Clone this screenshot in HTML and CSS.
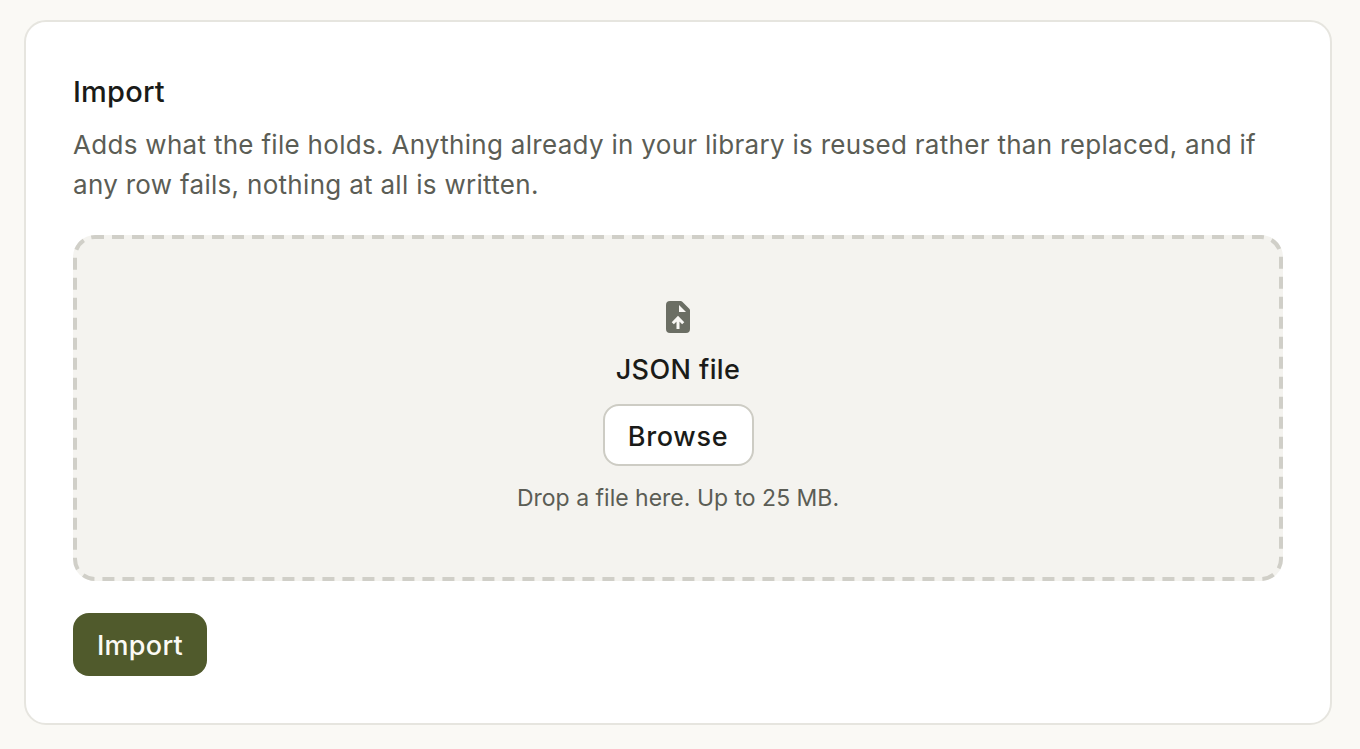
FILE: index.html
```html
<!DOCTYPE html>
<html lang="en">
<head>
    <meta charset="UTF-8">
    <meta name="viewport" content="width=device-width, initial-scale=1.0">
    <title>Import</title>
    <link rel="stylesheet" href="styles.css">
</head>
<body>
    <section class="card">
        <h2 class="card-title">Import</h2>
        <p class="card-text">Adds what the file holds. Anything already in your library is reused rather than replaced, and if any row fails, nothing at all is written.</p>

        <div class="dropzone">
            <svg class="dash-line"><rect class="dash-rect" rx="20" ry="20"/></svg>
            <svg class="file-icon" width="24" height="32" viewBox="0 0 24 32">
                <path fill="#6b6e64" d="M4 0H14.500A2.500 2.500 0 0 1 16.300 0.700L23.300 7.700A2.500 2.500 0 0 1 24 9.500V28A4 4 0 0 1 20 32H4A4 4 0 0 1 0 28V4A4 4 0 0 1 4 0Z"/>
                <path fill="#f8f7f4" d="M13 4L20 11H13Z"/>
                <path fill="none" stroke="#f8f7f4" stroke-width="3" d="M12 28V17.500M6.800 22.300L12 17L17.200 22.300"/>
            </svg>
            <div class="drop-title">JSON file</div>
            <button class="browse-btn">Browse</button>
            <div class="drop-hint">Drop a file here. Up to 25 MB.</div>
        </div>

        <button class="import-btn">Import</button>
    </section>
</body>
</html>
```

FILE: styles.css
```css
* {
    box-sizing: border-box;
}
body {
    margin: 0;
    padding: 20px 28px 24px 24px;
    background-color: #faf9f5;
    color: #1a1b18;
    font-family: Inter, "Liberation Sans", sans-serif;
}
.card {
    background-color: #fff;
    border: 2px solid #e6e5df;
    border-radius: 22px;
    padding: 47px;
    height: 705px;
}
.card-title {
    margin: 0;
    padding-top: 1px;
    font-size: 29px;
    line-height: 44px;
    font-weight: 500;
    letter-spacing: 0.2px;
}
.card-text {
    margin: 11px 0 0;
    font-size: 26px;
    line-height: 40px;
    letter-spacing: 0.3px;
    color: #5b5d55;
}
.dropzone {
    position: relative;
    margin-top: 30px;
    height: 346px;
    background-color: #f4f3ef;
    border-radius: 22px;
    display: flex;
    flex-direction: column;
    align-items: center;
    padding-top: 66px;
}
.dash-line {
    position: absolute;
    top: 0;
    left: 0;
    width: 100%;
    height: 100%;
}
.dash-rect {
    x: 2px;
    y: 2px;
    width: calc(100% - 4px);
    height: calc(100% - 4px);
    fill: none;
    stroke: #d0cfc8;
    stroke-width: 4;
    stroke-dasharray: 12 8;
    stroke-dashoffset: 3;
}
.file-icon {
    display: block;
    position: relative;
}
.drop-title {
    margin-top: 17px;
    font-size: 27px;
    line-height: 40px;
    font-weight: 500;
    letter-spacing: 0.4px;
}
.browse-btn {
    margin-top: 14px;
    width: 151px;
    height: 62px;
    padding: 2px 0 0;
    background-color: #fff;
    border: 2px solid #cdccc4;
    border-radius: 16px;
    color: #1a1b18;
    font-family: inherit;
    font-size: 27px;
    font-weight: 500;
    letter-spacing: 0.7px;
    position: relative;
}
.drop-hint {
    margin-top: 14px;
    font-size: 23px;
    line-height: 36px;
    color: #5b5d55;
}
.import-btn {
    display: block;
    margin-top: 32px;
    width: 134px;
    height: 63px;
    padding: 2px 0 0;
    background-color: #505a2c;
    border: none;
    border-radius: 16px;
    color: #fbfaf5;
    font-family: inherit;
    font-size: 27px;
    font-weight: 500;
    letter-spacing: 0.3px;
}
```
